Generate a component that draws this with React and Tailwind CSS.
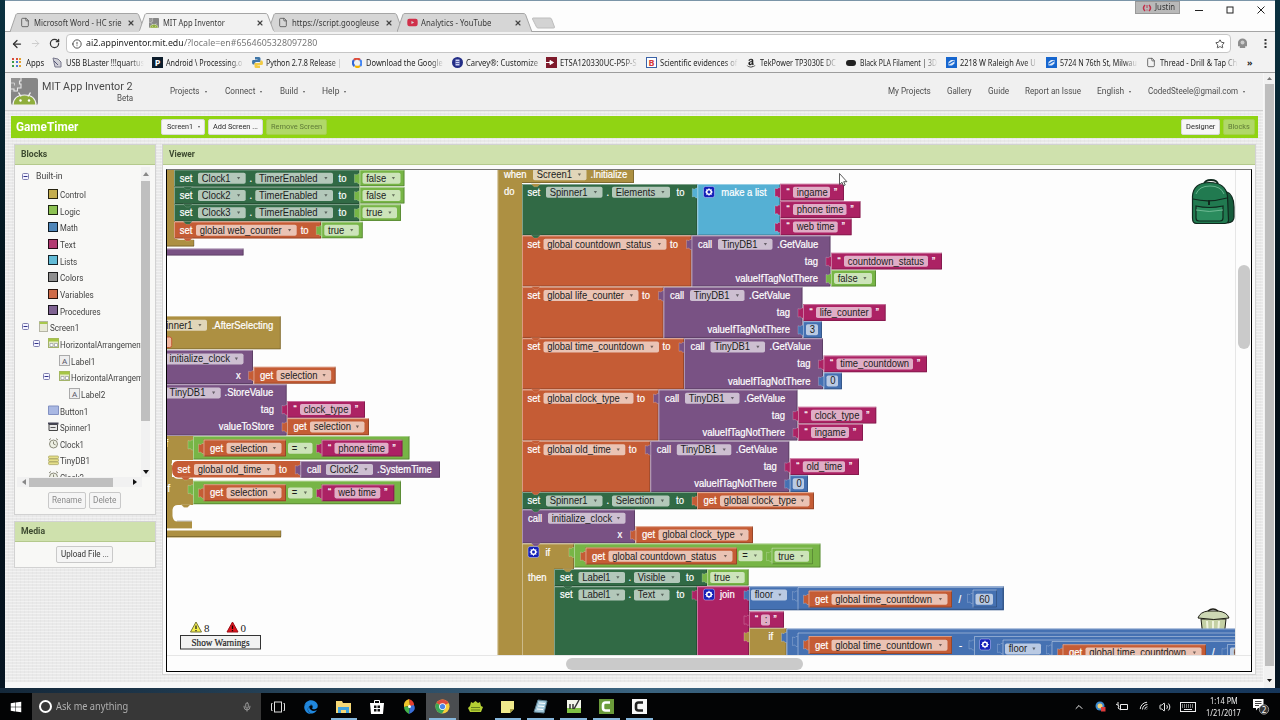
import React, { useLayoutEffect, useRef, useState } from 'react';
import { Star, Mic, ChevronUp, Volume2, Wifi, Info, ArrowLeft, ArrowRight, RotateCw, X, File } from 'lucide-react';
import { FaWindows, FaEdge, FaYoutube, FaAmazon } from 'react-icons/fa';

const C = {
  control: '#ad9042',
  logic: '#77b546',
  math: '#4571b2',
  text: '#ac2264',
  list: '#55b0d4',
  green: '#316a45',
  variable: '#c55c35',
  proc: '#795284'
};

// Squeezes or stretches a line of text to a fixed width
const Fit = ({ w, children, className = '' }) => {
  const ref = useRef(null);
  const [scale, setScale] = useState(1);
  useLayoutEffect(() => {
    if (ref.current) setScale(w / ref.current.offsetWidth);
  }, [w, children]);
  return (
    <span className={`inline-block shrink-0 ${className}`} style={{ width: w }}>
      <span ref={ref} className="inline-block origin-left whitespace-pre" style={{ transform: `scaleX(${scale})` }}>
        {children}
      </span>
    </span>
  );
};

/* ---------- Browser chrome ---------- */

const TabShape = ({ active }) => (
  <svg className="absolute inset-0 h-full w-full" viewBox="0 0 136 19" preserveAspectRatio="none">
    <path d="M0 19 L6 1.5 Q6.500 .5 8 .5 H126 Q128 .5 128.500 1.5 L135 19" fill={active ? '#f1f1f1' : '#d6d6d6'} stroke="#a5a5a5" strokeWidth="1" />
    {active && <path d="M0 18.500 H135" stroke="#f1f1f1" strokeWidth="1.500" />}
  </svg>
);

const BrowserTab = ({ icon, title, w, active }) => (
  <div className={`relative -mr-[7px] h-[19px] w-[136px] ${active ? 'z-10' : ''}`}>
    <TabShape active={active} />
    <div className="relative flex h-full items-center pl-[10px]">
      <span className="flex w-[14px] shrink-0">{icon}</span>
      <span className="w-[93px] overflow-hidden text-[9px] text-[#3c3c3c]">
        <Fit w={w}>{title}</Fit>
      </span>
      <X className="h-[8px] w-[8px] text-[#444]" strokeWidth={3.500} />
    </div>
  </div>
);

const Page = () => <File className="h-[11px] w-[10px] text-[#555]" strokeWidth={2} />;

const AndroidLogo = ({ className }) => (
  <svg className={className} viewBox="0 0 27 27">
    <rect width="27" height="27" rx="2" fill="#868686" />
    <path d="M0 0h10v10H6v4H0z" fill="#929292" />
    <path d="M10 0v3H8.500v3H10v4H6.500v3H3v-2H0" fill="none" stroke="#e6e6e6" strokeWidth="1.100" />
    <path d="M0 5h3.500v2.500" fill="none" stroke="#dcdcdc" strokeWidth=".8" />
    <path d="M2 27Q2.500 17 13.500 17T25 27z" fill="#8fae3c" stroke="#f2f2f2" strokeWidth="1.200" />
    <path d="M7.500 14.500l2.500 4M19.500 14.500l-2.500 4" stroke="#f2f2f2" strokeWidth="1.400" />
    <circle cx="9.500" cy="22.500" r="1.200" fill="#fff" />
    <circle cx="18" cy="22.500" r="1.200" fill="#fff" />
  </svg>
);

const Python = () => (
  <svg className="h-[11px] w-[11px]" viewBox="0 0 11 11">
    <path d="M3 0h4q1.500 0 1.500 1.500V5H4Q2.500 5 2.500 7.500H1Q0 7 0 5t1-2h4.500v-.5H3z" fill="#3f76a8" />
    <path d="M8 11H4Q2.500 11 2.500 9.500V6H7q1.500 0 1.500-2.500H10q1 .5 1 2.500t-1 2H5.500v.5H8z" fill="#f2cb45" />
  </svg>
);

const Zillow = () => (
  <svg className="h-[11px] w-[11px]" viewBox="0 0 11 11">
    <rect width="11" height="11" fill="#1666cf" />
    <path d="M2.500 5L5 3h3.500v3.500L6 8.500H2.500z" fill="#fff" opacity=".85" />
    <path d="M3 7l5-3" stroke="#1666cf" strokeWidth="1.200" />
  </svg>
);

const GoogleRing = () => (
  <svg className="h-[10px] w-[10px]" viewBox="0 0 10 10" fill="none" strokeWidth="2.200">
    <path d="M2 2a4 4 0 0 1 6 0" stroke="#dd4b39" />
    <path d="M8 2a4 4 0 0 1 0 6" stroke="#4285f4" />
    <path d="M8 8a4 4 0 0 1-5 0" stroke="#f4b400" />
    <path d="M2.500 8a4 4 0 0 1-.5-6" stroke="#3367d6" />
  </svg>
);

const BOOKMARKS = [
  { cell: 'w-[100px]', w: 78, title: 'USB BLaster !!!quartus', icon: <svg className="h-[11px] w-[10px]" viewBox="0 0 10 11"><path d="M1 1l5 1 3 3v5H3z" fill="#cfcfd6" stroke="#77778c" /><path d="M2 4l4 4" stroke="#555577" /></svg> },
  { cell: 'w-[100px]', w: 76, title: 'Android \\ Processing.o', icon: <span className="flex h-[11px] w-[11px] items-center justify-center bg-[#0c1c2b] text-[9px] font-bold text-white">P</span> },
  { cell: 'w-[100px]', w: 76, title: 'Python 2.7.8 Release |', icon: <Python /> },
  { cell: 'w-[100px]', w: 77, title: 'Download the Google', icon: <GoogleRing /> },
  { cell: 'w-[94px]', w: 72, title: 'Carvey®: Customize', icon: <svg className="h-[11px] w-[11px]" viewBox="0 0 11 11"><circle cx="5.500" cy="5.500" r="5.500" fill="#232d86" /><path d="M3.500 2.500h4v6h-4z" fill="#cfd5f5" /><path d="M3.500 4.500h4M3.500 6.500h4" stroke="#232d86" strokeWidth=".7" /></svg> },
  { cell: 'w-[100px]', w: 77, title: 'ETSA120330UC-P5P-S', icon: <svg className="h-[11px] w-[11px]" viewBox="0 0 11 11"><rect width="11" height="11" fill="#7e1a2b" /><path d="M0 5.500h4M4 3.500v4l3.500-2z" fill="#fff" stroke="#fff" /></svg> },
  { cell: 'w-[100px]', w: 77, title: 'Scientific evidences of', icon: <span className="flex h-[11px] w-[11px] items-center justify-center border border-[#3a62a8] bg-white text-[9px] font-bold text-[#d43a3a]">B</span> },
  { cell: 'w-[100px]', w: 76, title: 'TekPower TP3030E DC', icon: <FaAmazon className="h-[10px] w-[10px] text-[#222]" /> },
  { cell: 'w-[100px]', w: 77, title: 'Black PLA Filament | 3D', icon: <span className="h-[6px] w-[10px] rounded-sm bg-[#222]" /> },
  { cell: 'w-[100px]', w: 76, title: '2218 W Raleigh Ave U', icon: <Zillow /> },
  { cell: 'w-[100px]', w: 77, title: '5724 N 76th St, Milwau', icon: <Zillow /> },
  { cell: 'w-[100px]', w: 77, title: 'Thread - Drill & Tap Ch', icon: <Page /> }
];

const APP_DOTS = ['#d84a3a', '#d84a3a', '#e0a030', '#3a9a4a', '#4a7ad8', '#e0a030', '#3a9a4a', '#4a7ad8', '#e0a030'];

const BrowserTop = () => (
  <div className="shrink-0 font-['Noto_Sans',sans-serif]">
    {/* Title bar and tabs */}
    <div className="flex h-[31px] items-end justify-between border-b border-[#a5a5a5] bg-[#fdfdfd]">
      <div className="-mb-px flex items-end pl-[5px]">
        <BrowserTab title="Microsoft Word - HC srie" w={88} icon={<Page />} />
        <BrowserTab title="MIT App Inventor" w={62} active icon={<AndroidLogo className="h-[10px] w-[10px]" />} />
        <BrowserTab title="https://script.googleuse" w={87} icon={<Page />} />
        <BrowserTab title="Analytics - YouTube" w={70} icon={<FaYoutube className="h-[11px] w-[11px] text-[#d0304a]" />} />
        <svg className="mb-[2px] ml-[6px] h-[13px] w-[24px]" viewBox="0 0 24 13">
          <path d="M1 1h17q1 0 1.500 1l3 8q.3 1-1 1H6q-1 0-1.500-1L.5 2Q.3 1 1 1z" fill="#d3d3d3" stroke="#bdbdbd" />
        </svg>
      </div>
      <div className="flex h-full items-start pr-[10px]">
        <div className="flex h-[13px] w-[45px] items-center gap-[3px] border border-[#999] bg-[#b9b9b9] pl-[6px] text-[8.5px] text-[#333]">
          <svg className="h-[8px] w-[10px]" viewBox="0 0 10 8"><path d="M3 1Q0 4 3 7M7 1q3 3 0 6" stroke="#c0304a" strokeWidth="1.500" fill="none" /><path d="M5 1v3M5 5.500v1" stroke="#c0304a" /></svg>
          <Fit w={20}>Justin</Fit>
        </div>
        <div className="ml-[15px] flex items-center gap-[23px] pt-[5px] text-[#222]">
          <svg className="h-[8px] w-[8px]" viewBox="0 0 8 8"><path d="M0 4.500h8" stroke="#222" /></svg>
          <svg className="h-[8px] w-[8px]" viewBox="0 0 8 8"><rect x="1" y="1" width="6" height="6" fill="none" stroke="#222" /></svg>
          <svg className="h-[8px] w-[8px]" viewBox="0 0 8 8"><path d="M.5.5l7 7M7.500.5l-7 7" stroke="#222" /></svg>
        </div>
      </div>
    </div>
    {/* Address bar */}
    <div className="flex h-[22px] items-center bg-[#f2f2f2] pt-[1px] pl-[6px]">
      <ArrowLeft className="h-[12px] w-[12px] text-[#333]" strokeWidth={2.500} />
      <ArrowRight className="ml-[7px] h-[11px] w-[11px] text-[#c9c9c9]" strokeWidth={2} />
      <RotateCw className="ml-[8px] h-[11px] w-[11px] text-[#333]" strokeWidth={2.700} />
      <div className="ml-[6px] flex h-[19px] w-[1165px] items-center rounded-sm border border-[#c6c6c6] bg-white pl-[5px]">
        <Info className="h-[10px] w-[10px] rotate-180 text-[#444]" strokeWidth={2.200} />
        <span className="ml-[4px] text-[9.5px] text-[#222]"><Fit w={98}>ai2.appinventor.mit.edu</Fit></span>
        <span className="text-[9.5px] text-[#777]"><Fit w={133}>/?locale=en#6564605328097280</Fit></span>
        <Star className="ml-auto mr-[5px] h-[10px] w-[10px] text-[#333]" strokeWidth={2} />
      </div>
      <svg className="ml-[7px] h-[11px] w-[9px]" viewBox="0 0 10 12"><path d="M0 9V5a5 4.500 0 0 1 10 0v4H8v2H2V9z" fill="#8d8d8d" /><circle cx="5" cy="5" r="2.200" fill="#ccc" /></svg>
      <svg className="ml-[17px] h-[11px] w-[3px]" viewBox="0 0 3 11" fill="#333"><path d="M.5 1h2v2h-2zM.5 4.500h2v2h-2zM.5 8h2v2h-2z" /></svg>
    </div>
    {/* Bookmarks */}
    <div className="flex h-[19px] items-center border-b border-[#9d9d9d] bg-[#f2f2f2] pb-[1px] pl-[7px] text-[9px] text-[#1f1f1f]">
      <span className="grid h-[9px] w-[10px] shrink-0 grid-cols-3 gap-px">
        {APP_DOTS.map((c, i) => <i key={i} className="h-[2px] w-[2px]" style={{ background: c }} />)}
      </span>
      <Fit w={18} className="ml-[4px] mr-[8px]">Apps</Fit>
      {BOOKMARKS.map((b) => (
        <span key={b.title} className={`flex shrink-0 items-center ${b.cell}`}>
          <span className="flex w-[14px] shrink-0 items-center">{b.icon}</span>
          <span className="w-[78px] overflow-hidden [mask-image:linear-gradient(to_right,black_82%,transparent)]">
            <Fit w={b.w}>{b.title}</Fit>
          </span>
        </span>
      ))}
      <span className="ml-[1px] font-bold">»</span>
    </div>
  </div>
);

/* ---------- App Inventor header ---------- */

const Caret = () => <span className="ml-[5px] inline-block h-0 w-0 border-x-[1.5px] border-t-[2.5px] border-x-transparent border-t-[#555]" />;

const AppHeader = () => (
  <div className="flex h-[38px] shrink-0 items-center border-b border-[#cfcfcf] bg-[#f0f0f0] pl-[6px] text-[9px] text-[#4d4d4d]">
    <AndroidLogo className="h-[27px] w-[27px]" />
    <div className="ml-[4px] flex w-[128px] flex-col">
      <span className="text-[11.5px] leading-[13px] text-[#4a4a4a]"><Fit w={91}>MIT App Inventor 2</Fit></span>
      <span className="pl-[75px] text-[8.5px] leading-[10px]"><Fit w={16}>Beta</Fit></span>
    </div>
    <div className="flex">
      <span className="flex w-[54.5px] items-center"><Fit w={29.5}>Projects</Fit><Caret /></span>
      <span className="flex w-[55px] items-center"><Fit w={30}>Connect</Fit><Caret /></span>
      <span className="flex w-[42.5px] items-center"><Fit w={18}>Build</Fit><Caret /></span>
      <span className="flex items-center"><Fit w={17}>Help</Fit><Caret /></span>
    </div>
    <div className="ml-auto flex pr-[18px]">
      <Fit w={42.5} className="mr-[16px]">My Projects</Fit>
      <Fit w={25} className="mr-[16px]">Gallery</Fit>
      <Fit w={21} className="mr-[16px]">Guide</Fit>
      <Fit w={56.5} className="mr-[16px]">Report an Issue</Fit>
      <span className="flex w-[51px] items-center"><Fit w={27}>English</Fit><Caret /></span>
      <span className="flex items-center"><Fit w={90}>CodedSteele@gmail.com</Fit><Caret /></span>
    </div>
  </div>
);

const Btn = ({ w, label, width, disabled, caret }) => (
  <span className={`flex h-[16px] items-center justify-center rounded-[2px] border text-[8px] ${width} ${disabled ? 'border-[#a5d04c] bg-[#b0d869] text-[#5f7a38]' : 'border-[#d8d8d8] bg-[#f6f6f6] text-[#2b2b2b]'}`}>
    <Fit w={w}>{label}</Fit>
    {caret && <Caret />}
  </span>
);

const ProjectBar = () => (
  <div className="flex h-[22px] shrink-0 items-center bg-[#90d413] pl-[5px] pr-[3px]">
    <span className="w-[145px] text-[12px] font-bold text-white"><Fit w={62}>GameTimer</Fit></span>
    <span className="flex gap-[3px]">
      <Btn width="w-[44px]" w={26} label="Screen1" caret />
      <Btn width="w-[55px]" w={45} label="Add Screen ..." />
      <Btn width="w-[61px]" w={51} label="Remove Screen" disabled />
    </span>
    <span className="ml-auto flex gap-[3px]">
      <Btn width="w-[39px]" w={29} label="Designer" />
      <Btn width="w-[32px]" w={22} label="Blocks" disabled />
    </span>
  </div>
);

/* ---------- Blocks panel ---------- */

const BUILT_IN = [
  { name: 'Control', w: 26, color: 'bg-[#c4ad4e]' },
  { name: 'Logic', w: 20, color: 'bg-[#8cc152]' },
  { name: 'Math', w: 18, color: 'bg-[#4f86b9]' },
  { name: 'Text', w: 15.500, color: 'bg-[#b23a71]' },
  { name: 'Lists', w: 17, color: 'bg-[#62bbd6]' },
  { name: 'Colors', w: 23, color: 'bg-[#8f8f8f]' },
  { name: 'Variables', w: 33.500, color: 'bg-[#cf6c49]' },
  { name: 'Procedures', w: 40.500, color: 'bg-[#7f6392]' }
];

const Minus = () => (
  <svg className="h-[7px] w-[7px] shrink-0" viewBox="0 0 7 7"><rect x=".5" y=".5" width="6" height="6" rx="1" fill="#f4f4ff" stroke="#7f7fae" /><path d="M1.500 3.500h4" stroke="#33338a" /></svg>
);

const CompIcon = ({ kind }) => (
  <svg className="h-[11px] w-[11px] shrink-0" viewBox="0 0 11 11">
    {kind === 'screen' && <g><rect x="1.500" y=".5" width="8" height="10" fill="#e9ead8" stroke="#b5b5a5" /><path d="M1.500 1h8v2h-8z" fill="#a8c84c" /></g>}
    {kind === 'arr' && <g><rect x=".5" y=".5" width="10" height="9" fill="#e4ebc9" stroke="#a3b36a" /><path d="M.5.5h10v3H.5z" fill="#a6c545" /><path d="M2 5.500h3v3H2zM6.500 5.500h3v3h-3z" fill="#fff" stroke="#889" strokeWidth=".6" /></g>}
    {kind === 'label' && <g><rect x=".5" y=".5" width="10" height="10" fill="#eee" stroke="#aaa" /><text x="5.500" y="8.500" fontSize="8" textAnchor="middle" fill="#556">A</text></g>}
    {kind === 'button' && <path d="M.5 1h10v8.500H.5z" fill="#a9b8e3" stroke="#8291c2" />}
    {kind === 'spinner' && <g><path d="M1 3.500h8.500v6H1z" fill="#e8e8e8" stroke="#444" /><path d="M0 1.500h10.500v2H0z" fill="#445" /><path d="M2.500 6.500h5" stroke="#555" /></g>}
    {kind === 'clock' && <g fill="none" stroke="#8a8a7a"><circle cx="5.500" cy="6" r="4" fill="#eef0e4" /><path d="M5.500 3.500V6l2 .8M1 2l2-1.500M10 2L8 .5" /></g>}
    {kind === 'db' && <g fill="#e5df8a" stroke="#a39f55" strokeWidth=".7"><rect x=".5" y="1" width="10" height="2.600" rx="1" /><rect x=".5" y="4" width="10" height="2.600" rx="1" /><rect x=".5" y="7" width="10" height="2.600" rx="1" /></g>}
  </svg>
);

const TREE = [
  { pad: 'pl-[5px]', open: true, kind: 'screen', name: 'Screen1', w: 29, gap: 'ml-[9px]' },
  { pad: 'pl-[16px]', open: true, kind: 'arr', name: 'HorizontalArrangement1', w: 88, gap: 'ml-[8px]' },
  { pad: 'pl-[42px]', kind: 'label', name: 'Label1', w: 24 },
  { pad: 'pl-[26px]', open: true, kind: 'arr', name: 'HorizontalArrangement2', w: 88, gap: 'ml-[8.5px]' },
  { pad: 'pl-[52px]', kind: 'label', name: 'Label2', w: 24 },
  { pad: 'pl-[31px]', kind: 'button', name: 'Button1', w: 28 },
  { pad: 'pl-[31px]', kind: 'spinner', name: 'Spinner1', w: 31 },
  { pad: 'pl-[31px]', kind: 'clock', name: 'Clock1', w: 24 },
  { pad: 'pl-[31px]', kind: 'db', name: 'TinyDB1', w: 30 },
  { pad: 'pl-[31px]', kind: 'clock', name: 'Clock2', w: 24 }
];

const PanelHead = ({ children, w }) => (
  <div className="flex h-[20px] shrink-0 items-center border-b border-[#b4c98c] bg-[#cfe1ad] pl-[6px] text-[9px] font-bold text-[#3d4a30]">
    <Fit w={w}>{children}</Fit>
  </div>
);

const SmallBtn = ({ w, width, label, off }) => (
  <span className={`flex h-[17px] items-center justify-center rounded-[2px] border border-[#c9c9c9] bg-[#f5f5f5] text-[9px] ${width} ${off ? 'text-[#8a8a8a]' : 'text-[#333]'}`}>
    <Fit w={w}>{label}</Fit>
  </span>
);

const Sidebar = () => (
  <div className="flex w-[142px] shrink-0 flex-col gap-[6px] text-[9.5px] text-[#444]">
    <div className="h-[371px] border border-[#d2d2d2] bg-[#f8f8f6]">
      <PanelHead w={26}>Blocks</PanelHead>
      <div className="flex h-[312px] pt-[2px]">
        <div className="h-[310px] w-[126px] overflow-hidden pl-[2px]">
          <div className="flex h-[20px] items-center pb-[2px] pl-[5px]">
            <Minus />
            <Fit w={26.500} className="ml-[7px]">Built-in</Fit>
          </div>
          {BUILT_IN.map((b) => (
            <div key={b.name} className="flex h-[16.650px] items-center pl-[31px]">
              <i className={`mb-[3px] h-[10px] w-[10px] border border-black/80 ${b.color}`} />
              <Fit w={b.w} className="ml-[2px]">{b.name}</Fit>
            </div>
          ))}
          {TREE.map((t) => (
            <div key={t.name} className={`flex h-[16.650px] items-center ${t.pad}`}>
              {t.open && <span className="mb-[3px] flex"><Minus /></span>}
              <span className={`mb-[3px] flex ${t.gap || ''}`}><CompIcon kind={t.kind} /></span>
              <Fit w={t.w} className="ml-[1px]">{t.name}</Fit>
            </div>
          ))}
        </div>
        <div className="flex w-[9px] flex-col items-center bg-[#f1f1f1]">
          <svg className="my-[5px] h-[4px] w-[6px]" viewBox="0 0 6 4"><path d="M0 4l3-4 3 4z" fill="#888" /></svg>
          <div className="h-[240px] w-full bg-[#bfbfbf]" />
          <svg className="mb-[3px] mt-auto h-[4px] w-[6px]" viewBox="0 0 6 4"><path d="M0 0h6l-3 4z" fill="#111" /></svg>
        </div>
      </div>
      <div className="ml-[2px] flex h-[10px] w-[125px] items-center bg-[#f1f1f1]">
        <svg className="ml-[5px] h-[6px] w-[4px]" viewBox="0 0 4 6"><path d="M4 0v6L0 3z" fill="#888" /></svg>
        <div className="ml-[3px] h-[9px] w-[84px] bg-[#bfbfbf]" />
        <svg className="ml-[20px] h-[6px] w-[4px]" viewBox="0 0 4 6"><path d="M0 0v6l4-3z" fill="#111" /></svg>
      </div>
      <div className="mt-[5px] flex justify-center gap-[3px] pr-[2px]">
        <SmallBtn width="w-[38px]" w={30} label="Rename" off />
        <SmallBtn width="w-[32px]" w={23} label="Delete" off />
      </div>
    </div>
    <div className="h-[47px] border border-[#d2d2d2] bg-[#f8f8f6]">
      <PanelHead w={24}>Media</PanelHead>
      <div className="flex justify-center pr-[1px] pt-[4px]">
        <SmallBtn width="w-[57px]" w={48} label="Upload File ..." />
      </div>
    </div>
  </div>
);

/* ---------- Blocks workspace ---------- */

// Block body with light top/left and dark bottom/right edges
const B = ({ x, y, r, b, c, tab }) => (
  <g>
    {tab && <path d={`M${x + 0.5} ${y + 4}h-2q-.5 2-3.500 .5v8.500q3-1.500 3.500 1h2z`} fill={c} stroke="#fff" strokeOpacity=".35" strokeWidth=".6" />}
    <path d={`M${x} ${y}H${r}V${b}H${x}z`} fill={c} />
    <path d={`M${r - 0.5} ${y}V${b - 0.5}H${x}`} fill="none" stroke="#000" strokeOpacity=".22" />
    <path d={`M${r} ${y + 0.5}H${x + 0.5}V${b}`} fill="none" stroke="#fff" strokeOpacity=".38" />
  </g>
);

// Text at left edge x and vertical centre y
const T = ({ x, y, t, dark, end }) => (
  <text
    transform={`translate(${x} ${y + 3.5}) scale(.91 1)`}
    fontSize="10.4"
    textAnchor={end ? 'end' : 'start'}
    fill={dark ? '#1c1c1c' : '#fff'}
    stroke={dark ? 'none' : '#fff'}
    strokeWidth=".22"
    xmlSpace="preserve"
  >
    {t}
  </text>
);

// Editable field; d draws the dropdown arrow
const F = ({ x, r, y, t, d, tx }) => (
  <g>
    <rect x={x} y={y - 5.3} width={r - x} height="11" rx="1.800" fill="#fff" fillOpacity=".63" />
    <T x={tx ?? x + 3.7} y={y} t={t} dark />
    {d && <path d={`M${r - 8.7} ${y - 1.1}h3.200l-1.600 2.600z`} fill="#000" fillOpacity=".5" />}
  </g>
);

const Str = ({ x, y, r, t }) => (
  <g>
    <B x={x} y={y - 8.3} r={r} b={y + 8.5} c={C.text} tab />
    <T x={x + 6.5} y={y} t="“" />
    <F x={x + 13} r={r - 14} y={y} t={t} />
    <T x={r - 10} y={y} t="”" />
  </g>
);

const Bool = ({ x, y, t }) => {
  const r = x + (t === 'true' ? 41.5 : 45);
  return (
    <g>
      <B x={x} y={y - 8.3} r={r} b={y + 8.3} c={C.logic} tab />
      <F x={x + 3} r={r - 4} y={y} t={t} d />
    </g>
  );
};

const Num = ({ x, y, t, r }) => (
  <g>
    <B x={x} y={y - 8.3} r={r} b={y + 8.5} c={C.math} tab />
    <F x={x + 3} r={r - 4} y={y} t={t} />
  </g>
);

const Get = ({ x, y, r, t, h = 8.5 }) => (
  <g>
    <B x={x} y={y - h} r={r} b={y + h} c={C.variable} tab />
    <T x={x + 6.5} y={y} t="get" />
    <F x={x + 23} r={r - 4.500} y={y} t={t} d />
  </g>
);

const Notch = ({ x, y, c }) => <path d={`M${x} ${y - 0.5}l3 3h3.500l3-3z`} fill={c} stroke="#fff" strokeOpacity=".3" strokeWidth=".5" />;

const Gear = ({ x, y }) => (
  <g>
    <rect x={x} y={y - 5.500} width="11" height="11" rx="2" fill="#1420b8" stroke="#c8ccff" strokeWidth=".5" />
    <circle cx={x + 5.5} cy={y} r="2.300" fill="none" stroke="#fff" strokeWidth="1.500" />
    <path d={`M${x + 5.5} ${y - 3.8}v7.600M${x + 1.7} ${y}h7.600M${x + 2.9} ${y - 2.6}l5.200 5.200M${x + 8.1} ${y - 2.6}l-5.200 5.200`} stroke="#fff" strokeWidth=".9" />
    <circle cx={x + 5.5} cy={y} r="1.400" fill="#1420b8" />
  </g>
);

// "set global … to call TinyDB1.GetValue" row
const StoreRow = ({ y, px, name, tag, tagR, children }) => (
  <g>
    <B x={522} y={y - 8.5} r={px} b={y + 42.5} c={C.variable} />
    <T x={527.5} y={y} t="set" />
    <F x={543.5} r={px - 25} y={y} t={name} d />
    <T x={px - 21.5} y={y} t="to" />
    <B x={px} y={y - 8.5} r={px + 139} b={y + 42.5} c={C.proc} tab />
    <T x={px + 6.5} y={y} t="call" />
    <F x={px + 26.5} r={px + 81} y={y} t="TinyDB1" d />
    <T x={px + 85.5} y={y} t=".GetValue" />
    <T x={px + 126.5} y={y + 17} t="tag" end />
    <T x={px + 126.5} y={y + 34.2} t="valueIfTagNotThere" end />
    <Str x={px + 139.5} y={y + 17} r={tagR} t={tag} />
    {children}
  </g>
);

const LeftBlocks = () => (
  <g>
    <path d="M167 170h8v69h19v7.500h-27z" fill={C.control} />
    <path d="M167 246h27v-6" fill="none" stroke="#000" strokeOpacity=".25" />
    <B x={160} y={248.5} r={243.6} b={255.6} c={C.proc} />
    {[['Clock1', 178, 'false'], ['Clock2', 195.3, 'false'], ['Clock3', 212.6, 'true']].map(([n, y, v]) => (
      <g key={n}>
        <B x={174} y={y - 8.5} r={359.5} b={y + 8.7} c={C.green} />
        <T x={179.7} y={y} t="set" />
        <F x={198} r={245.7} y={y} t={n} d />
        <T x={249.5} y={y} t="." />
        <F x={255.3} r={333} y={y} t="TimerEnabled" d />
        <T x={338.5} y={y} t="to" />
        <Bool x={359.5} y={y} t={v} />
      </g>
    ))}
    <path d="M175 224v11q1 4 5 4h142" fill="none" stroke="#fff" strokeWidth="1.500" />
    <B x={174} y={221.5} r={321} b={238.5} c={C.variable} />
    <T x={179.7} y={230} t="set" />
    <F x={196} r={296.7} y={230} t="global web_counter" d />
    <T x={300.7} y={230} t="to" />
    <Bool x={321.3} y={230} t="true" />
    <Notch x={183} y={187.2} c={C.green} />
    <Notch x={183} y={204.5} c={C.green} />
    <Notch x={183} y={221.8} c={C.green} />
    <Notch x={183} y={238.5} c={C.variable} />

    <B x={160} y={316} r={280.8} b={349.3} c={C.control} />
    <F x={150} r={207} y={325} t="Spinner1" tx={154.7} d />
    <T x={211.7} y={325} t=".AfterSelecting" />
    <rect x="150" y="337" width="21.700" height="10.500" rx="2" fill="#f0b8a0" stroke={C.variable} />

    <B x={160} y={350} r={253} b={384} c={C.proc} />
    <F x={150} r={243.5} y={358.7} t="initialize_clock" tx={169.5} d />
    <T x={236} y={375.5} t="x" />
    <Get x={253.5} y={375.2} r={335.7} t="selection" />

    <B x={160} y={384.3} r={286.7} b={435.5} c={C.proc} />
    <F x={150} r={220.7} y={392.7} t="TinyDB1" tx={169.5} d />
    <T x={224.5} y={392.7} t=".StoreValue" />
    <T x={274} y={409.3} t="tag" end />
    <T x={274} y={426.5} t="valueToStore" end />
    <Str x={287} y={409.2} r={365} t="clock_type" />
    <Get x={287} y={426.7} r={369} t="selection" />

    <path d="M167 436h26v24h-21v17h21v28h-15q-5 0-5.500 5v6q.5 5.500 5 5.500h14.500v7h-25v2h114v7H167z" fill={C.control} />
    <path d="M167 529.200h25" stroke="#fff" strokeOpacity=".7" />
    <path d="M167 536.500h114v-6M177 521h15" fill="none" stroke="#000" strokeOpacity=".25" />
    <T x={165.500} y={443.500} t="f" />
    <T x={167.500} y={488.500} t="f" />
    {[[448, 409.5, 402.5, 'phone time'], [492.7, 401, 394.3, 'web time']].map(([y, r, sr, t]) => (
      <g key={t}>
        <B x={193} y={y - 12} r={r} b={y + 11.5} c={C.logic} tab />
        <Get x={203.5} y={y} r={286} t="selection" />
        <F x={288} r={312.5} y={y} t="=" d />
        <Str x={321.5} y={y} r={sr} t={t} />
      </g>
    ))}
    <path d="M172 465q1-4 4-4M173 473q1 5 5 5h262" fill="none" stroke="#fff" strokeWidth="1.500" />
    <path d="M178 461h122v16.500H178q-6 0-6-8.500t6-8z" fill={C.variable} />
    <T x={177.5} y={469.300} t="set" />
    <F x={194} r={275.5} y={469.300} t="global old_time" d />
    <T x={279} y={469.300} t="to" />
    <B x={300.3} y={461} r={440} b={477.800} c={C.proc} tab />
    <T x={307} y={469.300} t="call" />
    <F x={326} r={373} y={469.300} t="Clock2" d />
    <T x={377} y={469.300} t=".SystemTime" />
    <Notch x={181} y={477.500} c={C.variable} />
    <Notch x={181} y={505} c={C.control} />
  </g>
);

const RightBlocks = () => (
  <g>
    <path d="M497.500 160H634v23H522v480h-24.500z" fill={C.control} />
    <path d="M633.500 170v12.500H522" fill="none" stroke="#000" strokeOpacity=".25" />
    <path d="M498 170v490" stroke="#fff" strokeOpacity=".3" />
    <T x={504} y={174.5} t="when" />
    <F x={533} r={586.5} y={174.5} t="Screen1" d />
    <T x={590.5} y={174.5} t=".Initialize" />
    <T x={504} y={191.5} t="do" />

    <B x={522} y={184} r={697.3} b={235.3} c={C.green} />
    <T x={527.5} y={192} t="set" />
    <F x={546} r={602.5} y={192} t="Spinner1" d />
    <T x={606.5} y={192} t="." />
    <F x={612} r={670} y={192} t="Elements" d />
    <T x={676.5} y={192} t="to" />
    <B x={697.3} y={184} r={780} b={235.3} c={C.list} tab />
    <Gear x={703.5} y={192} />
    <T x={721.3} y={192} t="make a list" />
    <Str x={780} y={192} r={844} t="ingame" />
    <Str x={780} y={209.4} r={860.5} t="phone time" />
    <Str x={780} y={226.8} r={851.7} t="web time" />

    <StoreRow y={244} px={691.5} name="global countdown_status" tag="countdown_status" tagR={942}>
      <Bool x={831} y={278.2} t="false" />
    </StoreRow>
    <StoreRow y={295.4} px={663.5} name="global life_counter" tag="life_counter" tagR={885.7}>
      <Num x={803} y={329.5} r={822} t="3" />
    </StoreRow>
    <StoreRow y={346.8} px={684} name="global time_countdown" tag="time_countdown" tagR={927}>
      <Num x={823.5} y={380.800} r={842} t="0" />
    </StoreRow>
    <StoreRow y={398.1} px={658.5} name="global clock_type" tag="clock_type" tagR={876.3}>
      <Str x={798} y={432.200} r={863} t="ingame" />
    </StoreRow>
    <StoreRow y={449.5} px={650.3} name="global old_time" tag="old_time" tagR={859}>
      <Num x={789.7} y={483.500} r={808} t="0" />
    </StoreRow>

    <B x={522} y={492} r={697} b={509.3} c={C.green} />
    <T x={527.5} y={500.7} t="set" />
    <F x={546} r={602.5} y={500.7} t="Spinner1" d />
    <T x={606.5} y={500.7} t="." />
    <F x={612} r={669.5} y={500.7} t="Selection" d />
    <T x={676} y={500.7} t="to" />
    <Get x={697} y={500.7} r={814} t="global clock_type" />

    <B x={522} y={509.5} r={635} b={543.3} c={C.proc} />
    <T x={528} y={518} t="call" />
    <F x={548} r={625.5} y={518} t="initialize_clock" d />
    <T x={617.5} y={534.700} t="x" />
    <Get x={635.5} y={534.700} r={753} t="global clock_type" />

    <B x={522} y={543.500} r={574} b={569.500} c={C.control} />
    <path d="M522 568h32v90h-32z" fill={C.control} />
    <path d="M522.500 568v90" stroke="#fff" strokeOpacity=".38" />
    <Gear x={528} y={552} />
    <T x={545.500} y={552} t="if" />
    <T x={528} y={577} t="then" />
    <B x={574} y={543.500} r={820.500} b={567.500} c={C.logic} tab />
    <Get x={585.500} y={556} r={737} t="global countdown_status" />
    <F x={738.500} r={762.500} y={555.500} t="=" d />
    <Bool x={771.500} y={556} t="true" />

    <B x={554} y={569} r={707} b={586} c={C.green} />
    <T x={560} y={577.3} t="set" />
    <F x={578.5} r={625} y={577.3} t="Label1" d />
    <T x={628.5} y={577.3} t="." />
    <F x={634} r={680} y={577.3} t="Visible" d />
    <T x={686} y={577.3} t="to" />
    <Bool x={707.2} y={577.3} t="true" />

    <B x={554} y={586.3} r={697} b={660} c={C.green} />
    <T x={560} y={594.8} t="set" />
    <F x={578.5} r={625} y={594.8} t="Label1" d />
    <T x={628.5} y={594.8} t="." />
    <F x={634} r={669.5} y={594.8} t="Text" d />
    <T x={676.5} y={594.8} t="to" />
    <B x={697} y={586.3} r={749} b={660} c={C.text} tab />
    <Gear x={703.5} y={594.5} />
    <T x={720} y={594.8} t="join" />

    <B x={749} y={586.3} r={1004} b={610.3} c={C.math} tab />
    <B x={797.5} y={587} r={1003.5} b={609.8} c={C.math} tab />
    <F x={751} r={787} y={594.8} t="floor" d />
    <Get x={808.5} y={599} r={952} t="global time_countdown" />
    <T x={958.500} y={599} t="/" />
    <B x={972.500} y={589.500} r={997} b={607.500} c={C.math} tab />
    <F x={975.5} r={993} y={599} t="60" />

    <B x={749} y={611.3} r={784} b={627.8} c={C.text} tab />
    <T x={755} y={619.5} t="“" />
    <F x={761} r={770} y={619.8} t=":" />
    <T x={773.5} y={619.5} t="”" />

    <B x={749} y={628} r={786.500} b={660} c={C.control} tab />
    <T x={768.500} y={636.3} t="if" />
    <B x={786.500} y={628.500} r={1300} b={660} c={C.math} tab />
    <B x={797.500} y={632.500} r={1300} b={660} c={C.math} tab />
    <Get x={808.500} y={645} r={952} t="global time_countdown" h={9} />
    <T x={959} y={645} t="-" />
    <B x={974} y={636} r={1300} b={670} c={C.math} tab />
    <Gear x={979.5} y={644.5} />
    <B x={1002.5} y={639.500} r={1300} b={670} c={C.math} tab />
    <F x={1005} r={1041} y={648.7} t="floor" d />
    <B x={1051.500} y={641} r={1300} b={670} c={C.math} tab />
    <Get x={1062.500} y={652.7} r={1206} t="global time_countdown" />
    <T x={1212} y={652.7} t="/" />
    <B x={1227} y={644} r={1300} b={670} c={C.math} tab />
    <F x={1230} r={1250} y={652.7} t="60" />

    <Notch x={531} y={184.3} c={C.control} />
    <Notch x={531} y={235.5} c={C.green} />
    <Notch x={531} y={286.9} c={C.variable} />
    <Notch x={531} y={338.3} c={C.variable} />
    <Notch x={531} y={389.6} c={C.variable} />
    <Notch x={531} y={441} c={C.variable} />
    <Notch x={531} y={492.200} c={C.variable} />
    <Notch x={531} y={509.500} c={C.green} />
    <Notch x={531} y={543.5} c={C.proc} />
    <Notch x={563} y={569.3} c={C.control} />
    <Notch x={563} y={586.5} c={C.green} />
  </g>
);

const Backpack = () => (
  <g stroke="#10291e" strokeWidth="1.200">
    <path d="M1204 184q1-4 7-4t7 4" fill="none" strokeWidth="1.800" />
    <path d="M1225 191q9 3 9 16v10q0 5-6 6z" fill="#175c3c" />
    <path d="M1192.500 218v-22q1-13.500 17-13.500t18 13.500l1 24q0 3.500-4 3.500h-28q-4 0-4-5.500z" fill="#217a50" />
    <path d="M1196 194q3-8 14-8t14 8" fill="none" stroke="#67b38d" strokeWidth="1" />
    <path d="M1193 199q16 4 34-1" fill="none" />
    <path d="M1196 206q13 3 27 0v12q0 3-3 3h-21q-3 0-3-3z" fill="#2b8c5e" />
    <path d="M1196 210q13 3 27 0" fill="none" stroke="#7cc4a0" strokeWidth=".8" />
    <path d="M1209 200v5" strokeWidth="2" />
  </g>
);

const TrashCan = () => (
  <g stroke="#1c1c14" strokeWidth="1">
    <path d="M1201 619l2 18h21l2-18z" fill="#c4d0a4" />
    <path d="M1207 621l1 14M1213 621v14M1219 621l-1 14" stroke="#eef3dc" strokeWidth="2" />
    <path d="M1198 618q2-6 10-7h10q9 1 11 7-15 3-31 0z" fill="#cdd8b4" />
    <path d="M1208 611q5-4 10 0" fill="none" strokeWidth="1.600" />
  </g>
);

const Workspace = () => (
  <svg className="block h-[485px] w-[1068px]" viewBox="167 170 1068 485" fontFamily="'Liberation Sans', Arial, sans-serif">
    <TrashCan />
    <LeftBlocks />
    <RightBlocks />
    <Backpack />
    <path d="M196 622l5.500 10h-11z" fill="#f3ee4a" stroke="#77773a" />
    <path d="M196 625.500v3.500M196 630v1.200" stroke="#222" strokeWidth="1.300" />
    <path d="M232.500 622l5.500 10h-11z" fill="#e0141e" stroke="#9c1018" />
    <path d="M232.500 625.500v3.500M232.500 630v1.200" stroke="#220000" strokeWidth="1.300" />
    <g fontFamily="'Liberation Serif', serif" fontSize="11" fill="#222">
      <text x="204" y="631.5">8</text>
      <text x="240.5" y="631.5">0</text>
      <rect x="180.500" y="635.500" width="80" height="13.500" fill="#f2f2f2" stroke="#333" />
      <text x="191.500" y="646" fontSize="10" textLength="58" lengthAdjust="spacingAndGlyphs" stroke="#222" strokeWidth=".2">Show Warnings</text>
    </g>
    <path d="M839.500 173.500v11l2.500-2.200 1.500 3.500 1.700-.8-1.500-3.300h3.200z" fill="#fff" stroke="#333" strokeWidth=".8" />
  </svg>
);

const Viewer = () => (
  <div className="h-[531px] w-[1094px] shrink-0 border border-[#d2d2d2] bg-[#fbfbfb]">
    <PanelHead w={26}>Viewer</PanelHead>
    <div className="ml-[3px] mt-[4px] h-[503px] w-[1086px] border border-t-[#777] border-black bg-[#fdfdfd]">
      <div className="flex">
        <Workspace />
        <div className="flex h-[485px] w-[16px] flex-col items-center border-l border-[#e6e6e6] pt-[95px]">
          <div className="h-[84px] w-[12px] rounded-md bg-[#cacaca]" />
        </div>
      </div>
      <div className="flex h-[16px] w-full items-center border-t border-[#e6e6e6] pl-[399px]">
        <div className="h-[12px] w-[237px] rounded-md bg-[#cacaca]" />
      </div>
    </div>
  </div>
);

/* ---------- Taskbar ---------- */

const Chrome = () => (
  <svg className="h-[15px] w-[15px]" viewBox="0 0 16 16">
    <circle cx="8" cy="8" r="7.500" fill="#f5cf3b" />
    <path d="M8 8L1.500 4.200A7.500 7.500 0 0 1 14.500 4.200z" fill="#dd4b3e" />
    <path d="M1.500 4.200A7.500 7.500 0 0 0 7.500 15.500L11 9.500 8 8z" fill="#3aa757" />
    <circle cx="8" cy="8" r="3.600" fill="#fff" />
    <circle cx="8" cy="8" r="2.800" fill="#4a86e8" />
  </svg>
);

const Camtasia = ({ fg, bg }) => (
  <svg className="h-[15px] w-[15px]" viewBox="0 0 15 15">
    <rect width="15" height="15" fill={bg} />
    <path d="M11 3.500H6.500Q4 3.500 4 6v3q0 2.500 2.500 2.500H11" fill="none" stroke={fg} strokeWidth="2.600" />
  </svg>
);

const APPS = [
  { id: 'view', icon: <svg className="h-[12px] w-[14px]" viewBox="0 0 14 12" fill="none" stroke="#ddd"><rect x="3.500" y="1" width="7" height="10" /><path d="M1.500 2.500H.5v7h1M12.500 2.500h1v7h-1" /></svg> },
  { id: 'edge', icon: <FaEdge className="h-[14px] w-[14px] text-[#2087dd]" /> },
  { id: 'files', on: true, icon: <svg className="h-[14px] w-[15px]" viewBox="0 0 15 14"><path d="M0 1h6l1 2h8v10H0z" fill="#f5d877" /><path d="M2 7h11v6H10v-3H5v3H2z" fill="#3fa3e0" /></svg> },
  { id: 'store', icon: <svg className="h-[15px] w-[14px]" viewBox="0 0 14 15"><path d="M4.500 4V1.500h5V4" fill="none" stroke="#fff" /><path d="M0 4h14l-1 11H1z" fill="#fff" /><path d="M4 6.500h2.500V9H4zM7.500 6.500H10V9H7.500zM4 10h2.500v2.500H4zM7.500 10H10v2.500H7.500z" fill="#111" /></svg> },
  { id: 'swirl', icon: <svg className="h-[15px] w-[13px]" viewBox="0 0 13 15"><path d="M6 0q6 2 5 8L7 7z" fill="#e6402e" /><path d="M6 0Q0 2 1 8l6-1z" fill="#f0c52a" /><path d="M1 8q0 4 5 7l1-8z" fill="#43b14b" /><path d="M11 6q3 6-5 9l1-8z" fill="#3a6fd8" /><circle cx="6.500" cy="7.500" r="1.500" fill="#fff" /></svg> },
  { id: 'chrome', on: true, active: true, icon: <Chrome /> },
  { id: 'arduino', icon: <svg className="h-[14px] w-[15px]" viewBox="0 0 15 14"><path d="M3 2l2 1 2.500-2L10 3l2-1 1 4 2 1-2 5H2L0 8l2-2z" fill="#b4cf33" /><path d="M3 7.500h9M3 10h9" stroke="#64801c" /></svg> },
  { id: 'sticky', on: true, icon: <svg className="h-[14px] w-[13px]" viewBox="0 0 13 14"><path d="M0 1h13v8l-4 4H0z" fill="#f0ea8c" /><path d="M13 9H9v4z" fill="#a8a040" /></svg> },
  { id: 'notepad', on: true, icon: <svg className="h-[15px] w-[15px]" viewBox="0 0 15 15"><path d="M5 1l9 1-3 12-10-1z" fill="#a7cbdc" stroke="#5b7f90" /><path d="M6 4l6 .5M5 7l6 .5M4 10l6 .5" stroke="#fff" /></svg> },
  { id: 'npp', on: true, icon: <svg className="h-[15px] w-[14px]" viewBox="0 0 14 15"><path d="M0 1h14v13H0z" fill="#f2f5ea" /><path d="M0 9h14v5H0z" fill="#7fc043" /><path d="M3 5v5M6 5v5M12 1L7 10" stroke="#333" strokeWidth="1.500" /></svg> },
  { id: 'cam1', on: true, icon: <Camtasia fg="#fff" bg="#6b9b3a" /> },
  { id: 'cam2', on: true, icon: <Camtasia fg="#222" bg="#f8f8f8" /> }
];

const Taskbar = () => (
  <div className="flex h-[27px] shrink-0 items-stretch bg-[#030405] font-['Noto_Sans',sans-serif] text-white">
    <div className="flex w-[32px] items-center justify-center"><FaWindows className="h-[12px] w-[12px]" /></div>
    <div className="mr-px flex w-[229px] items-center bg-[#373737] pl-[7px] pr-[9px]">
      <span className="h-[13px] w-[13px] rounded-full border-2 border-white" />
      <span className="ml-[4px] text-[10.5px] text-[#b0b0b0]"><Fit w={72}>Ask me anything</Fit></span>
      <Mic className="ml-auto h-[12px] w-[10px] text-[#aaa]" />
    </div>
    {APPS.map((a) => (
      <div key={a.id} className={`relative flex w-[32.800px] items-center justify-center ${a.active ? 'bg-[#4a4d50]' : ''}`}>
        {a.icon}
        {a.on && <i className="absolute inset-x-[3px] bottom-0 h-[2px] bg-[#86b7dc]" />}
      </div>
    ))}
    <div className="ml-auto flex items-center pr-[10px] text-[#eee]">
      <ChevronUp className="h-[12px] w-[12px]" />
      <svg className="ml-[10px] h-[11px] w-[11px]" viewBox="0 0 11 11"><circle cx="5" cy="5" r="4.500" fill="#3a8ad0" /><circle cx="5" cy="5" r="2.500" fill="#f3d27a" /><rect x="6" y="6" width="4.500" height="4.500" fill="#dd3a3a" /></svg>
      <svg className="ml-[10px] h-[9px] w-[12px]" viewBox="0 0 12 9" fill="none" stroke="#eee"><path d="M4.500 2.500h7v5h-7zM0 2l3 2-1 2 3 2M2 0v3" /></svg>
      <Wifi className="ml-[11px] h-[11px] w-[11px] -rotate-45" />
      <Volume2 className="ml-[9px] h-[12px] w-[12px]" />
      <svg className="ml-[9px] h-[10px] w-[16px]" viewBox="0 0 16 10" fill="none" stroke="#eee"><rect x=".5" y=".5" width="15" height="9" /><path d="M2 3h12M2 5h12" strokeDasharray="1 1" /><path d="M4 7.500h8" /></svg>
      <div className="ml-[10px] flex flex-col items-center text-[9px] leading-[12px]">
        <Fit w={28}>1:14 PM</Fit>
        <Fit w={35}>1/21/2017</Fit>
      </div>
      <svg className="ml-[12px] h-[17px] w-[17px]" viewBox="0 0 17 17">
        <path d="M0 1h10.500v9H5l-2 2.500V10H0z" fill="#fff" />
        <path d="M2 3.500h6.500M2 5.500h6.500M2 7.500h4" stroke="#111" strokeWidth=".8" />
        <circle cx="11" cy="11.500" r="4.700" fill="#333" stroke="#aaa" strokeWidth=".8" />
        <text x="11" y="14.500" fontSize="8" textAnchor="middle" fill="#fff">2</text>
      </svg>
    </div>
  </div>
);

const App = () => (
  <div className="flex h-[720px] w-[1280px] flex-col overflow-hidden bg-[#0c2436] font-['Roboto',sans-serif]">
    <div className="flex h-[688px] shrink-0 bg-gradient-to-b from-[#0b3241] via-[#020d14] to-[#061522]">
      <div className="ml-[5px] flex w-[1270px] flex-col border-t border-[#7b95a8] bg-[#f7f7f7]">
        <BrowserTop />
        <div className="flex h-[615px] shrink-0 justify-between">
          <div className="flex w-[1258px] flex-col">
            <AppHeader />
            <div className="flex h-[571px] flex-col bg-[#e9e9e9] bg-[repeating-linear-gradient(0deg,transparent_0_2px,#ffffff66_2px_3px),repeating-linear-gradient(90deg,transparent_0_3px,#dedede66_3px_4px)] pl-[6px] pr-[5px] pt-[5px]">
              <ProjectBar />
              <div className="mt-[6px] flex gap-[6px] pl-[3px]">
                <Sidebar />
                <Viewer />
              </div>
            </div>
          </div>
          <div className="mr-[1px] flex w-[10px] flex-col items-center bg-[#f1f1f1]">
            <svg className="my-[4px] h-[3px] w-[5px]" viewBox="0 0 5 3"><path d="M0 3l2.500-3L5 3z" fill="#777" /></svg>
            <div className="h-[582px] w-[9px] bg-[#bebebe]" />
            <svg className="mt-[13px] h-[3px] w-[5px]" viewBox="0 0 5 3"><path d="M0 0h5L2.500 3z" fill="#111" /></svg>
          </div>
        </div>
      </div>
    </div>
    <div className="h-[5px] shrink-0 bg-gradient-to-r from-[#14283a] via-[#3b6480] to-[#16365a]" />
    <Taskbar />
  </div>
);

export default App;
